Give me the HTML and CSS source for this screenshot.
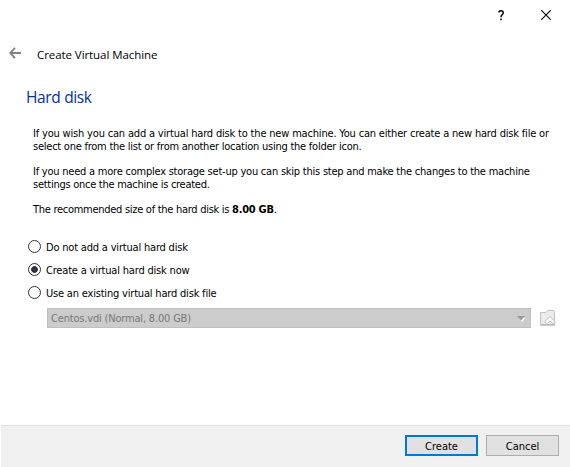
FILE: index.html
```
<!DOCTYPE html>
<html lang="en">
<head>
<meta charset="utf-8">
<title>Create Virtual Machine</title>
<link rel="stylesheet" href="styles.css">
</head>
<body>
<main class="dialog">
  <div class="titlebar">
    <svg class="help" width="7" height="11" viewBox="0 0 7 11"><path d="M1 2.4V1.7Q1.7.8 3 .8Q5.2.8 5.2 2.7Q5.2 3.8 4 4.8Q3 5.6 3 7.2M3 8.6v1.7" fill="none" stroke="#000" stroke-width="1.5"/></svg>
    <svg class="close" width="10" height="10" viewBox="0 0 10 10"><path d="M.3.3l9.4 9.4M9.7.3L.3 9.7" fill="none" stroke="#000" stroke-width="1.1"/></svg>
  </div>
  <header class="header">
    <svg width="13" height="12" viewBox="0 0 13 12"><path d="M6 .8L1.2 6L6 11.2M1.5 6H12" fill="none" stroke="#808080" stroke-width="1.8"/></svg>
    <span class="caption">Create Virtual Machine</span>
  </header>
  <section class="content">
    <h1>Hard disk</h1>
    <p><span class="wide">If you wish you can add a virtual hard disk to the new machine. You can either create a new hard disk file or</span><br>select one from the list or from another location using the folder icon.</p>
    <p><span class="mid">If you need a more complex storage set-up you can skip this step and make the changes to the machine</span><br><span class="tight">settings once the machine is created.</span></p>
    <p class="size">The recommended size of the hard disk is <b>8.00 GB</b>.</p>
    <div class="options">
      <label class="option"><i class="radio"></i><span>Do not add a virtual hard disk</span></label>
      <label class="option"><i class="radio on"></i><span>Create a virtual hard disk now</span></label>
      <label class="option"><i class="radio"></i><span>Use an existing virtual hard disk file</span></label>
    </div>
    <div class="picker">
      <div class="combo"><span>Centos.vdi (Normal, 8.00 GB)</span>
        <svg width="9" height="6" viewBox="0 0 9 6"><path d="M1.5 1.5h7L5 6z" fill="#fff"/><path d="M0 0h8L4 4.6z" fill="#999"/></svg>
      </div>
      <svg class="folder" width="16" height="16" viewBox="0 0 16 16"><path d="M.5 14.5V2.5H6L7.5.5H13.5L14.5 2V14.5z" fill="#ececec" stroke="#c2c2c2"/><path d="M.5 15H15" stroke="#b8b8b8" stroke-width="1.5"/><path d="M10 6.5L4.6 11.9L6.6 13.9L10 11L13.4 13.9L15.4 11.9z" fill="#fafafa" stroke="#bcbcbc"/></svg>
    </div>
  </section>
  <footer class="footer"><button class="primary">Create</button><button>Cancel</button></footer>
</main>
</body>
</html>
```
FILE: styles.css
```
* { box-sizing: border-box; }
body { margin: 0; background: #fff; color: #000; font: 11px/13px "DejaVu Sans Condensed", "DejaVu Sans", sans-serif; letter-spacing: -.24px; white-space: nowrap; }
svg { display: block; flex: none; }
.dialog { width: 570px; height: 467px; display: flex; flex-direction: column; }
.titlebar { height: 31px; display: flex; justify-content: flex-end; align-items: flex-start; gap: 36px; padding: 10px 19px 0 0; }
.header { height: 48px; display: flex; align-items: flex-start; gap: 15px; padding: 16px 0 0 9px; }
.caption { font: 11.5px/16px "Open Sans", sans-serif; letter-spacing: -.07px; }
.content { flex: 1; padding: 7px 0 0 33px; }
h1 { margin: 0 0 19px -7px; font: 15.5px/22px "Open Sans", sans-serif; letter-spacing: -.35px; color: #003399; }
p { margin: 0 0 12px; }
.wide { letter-spacing: -.18px; }
.mid { letter-spacing: -.225px; }
.tight { letter-spacing: -.27px; }
.size { letter-spacing: -.28px; }
.options { margin: 19px 0 0 -5px; letter-spacing: -.19px; }
.option { height: 23px; display: flex; align-items: center; gap: 5px; }
.option span { padding-top: 1px; }
.radio { width: 13px; height: 13px; border: 1px solid #333; border-radius: 50%; background: #fff; }
.on { background: radial-gradient(circle, #333 3px, #fff 3.7px); }
.picker { margin: 4px 14px 0 14px; display: flex; gap: 9px; align-items: center; }
.combo { width: 484px; height: 20px; display: flex; align-items: center; justify-content: space-between; padding: 1px 4px 0 3px; border: 1px solid #bfbfbf; background: #ccc; color: #787878; letter-spacing: -.18px; }
.footer { height: 42px; margin-left: 1px; display: flex; justify-content: flex-end; align-items: flex-start; gap: 8px; padding: 9px 11px 0 0; border-top: 1px solid #dfdfdf; background: #f0f0f0; }
button { width: 73px; height: 21px; margin: 0; padding: 1px 0 0 0; border: 1px solid #adadad; background: #e1e1e1; color: #000; font: inherit; letter-spacing: 0; }
.primary { border: 2px solid #0078d7; }
```
